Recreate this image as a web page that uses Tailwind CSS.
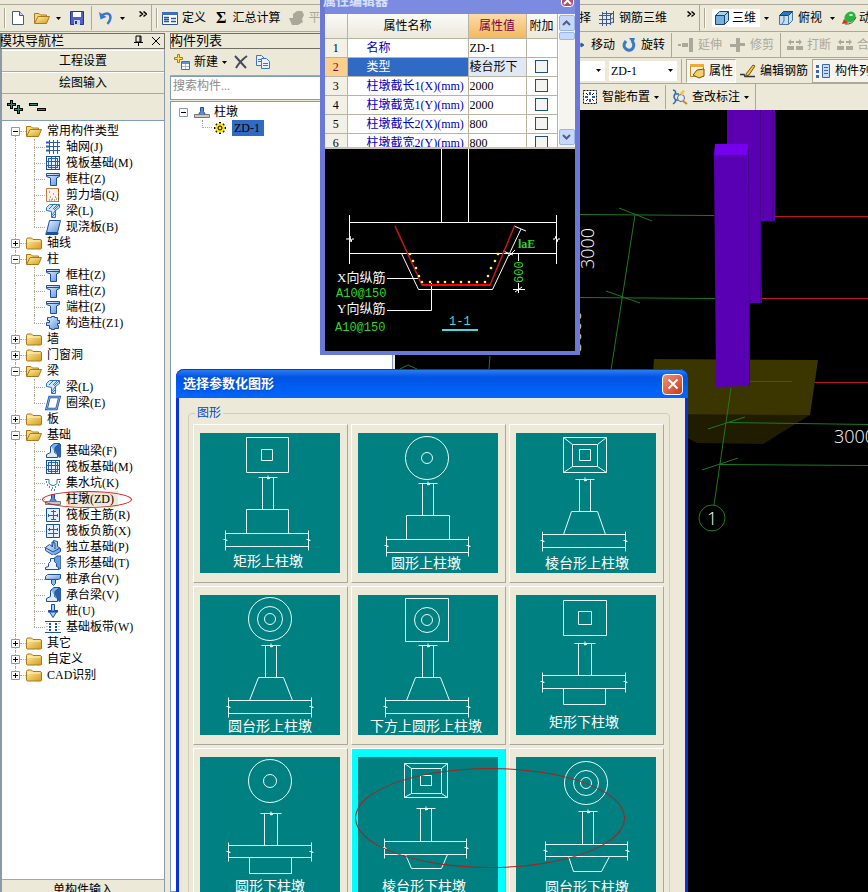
<!DOCTYPE html>
<html lang="zh-CN">
<head>
  <meta charset="UTF-8">
  <meta name="viewport" content="width=device-width, initial-scale=1.0">
  <title>选择参数化图形</title>
  <script src="https://cdn.jsdelivr.net/npm/@tailwindcss/browser@4"></script>
</head>
<body class="bg-[#ece9d8] font-['Liberation_Serif','Noto_Sans_CJK_SC',serif] text-xs leading-4 text-black">

  <!-- icon set -->
  <svg class="absolute size-0">
    <defs>
      <linearGradient id="gold" x1="0" y1="0" x2="1" y2="1"><stop offset="0" stop-color="#fff0a8"/><stop offset="1" stop-color="#d89a1c"/></linearGradient>
      <linearGradient id="blue" x1="0" y1="0" x2="1" y2="1"><stop offset="0" stop-color="#eaf4ff"/><stop offset="1" stop-color="#5a92dc"/></linearGradient>
    </defs>
    <symbol id="i-folder" viewBox="0 0 16 16"><path d="M.5 4.500q0-1.500 1.500-1.500h3.500l1.500 1.500h7q1.500 0 1.500 1.500v7q0 1-1 1h-13q-1 0-1-1z" fill="url(#gold)" stroke="#a87a1c"/><path d="M1.500 6h13" stroke="#fff6cc"/></symbol>
    <symbol id="i-open" viewBox="0 0 16 16"><path d="M.5 13V3.500h4.500l1.500 1.500h6v2.500" fill="#f4d878" stroke="#a87a1c"/><path d="M.5 13.500L4 6.500h11.500l-3 7z" fill="url(#gold)" stroke="#a87a1c"/></symbol>
    <symbol id="i-axis" viewBox="0 0 16 16"><path d="M4.500 1v14M8.500 1v14M12.500 1v14M1 3.500h14M1 7.500h14M1 11.500h14" stroke="#2c5fa8" fill="none"/><path d="M1 2.500h3v2h-3zM1 6.500h3v2h-3zM1 10.500h3v2h-3z" fill="#2c5fa8"/></symbol>
    <symbol id="i-raft" viewBox="0 0 16 16"><rect x="1.500" y="1.500" width="13" height="13" fill="#e4f0ff" stroke="#1c4f9c"/><rect x="3.500" y="3.500" width="9" height="9" fill="none" stroke="#2460b4"/><path d="M6.500 2v12M10.500 2v12M2 6.500h12M2 10.500h12" stroke="#2460b4"/></symbol>
    <symbol id="i-col" viewBox="0 0 16 16"><path d="M1.500 2.500h13v3l-3 1.500v7.500h-6V7l-4-1.500z" fill="url(#blue)" stroke="#1c4f9c"/><path d="M1.500 4.500h13" stroke="#1c4f9c"/></symbol>
    <symbol id="i-wall" viewBox="0 0 16 16"><path d="M1.500 1.500h12v13h-12z" fill="#fbf1e6" stroke="#c47a4a"/><path d="M13.500 2v13" stroke="#a05028" stroke-dasharray="3 1"/><path d="M4 5h1M8 7h1M5 10h1M4 13h1M7 12h1M10 10h1M9 13h1M11 12h1M6 13h1" stroke="#664"/></symbol>
    <symbol id="i-beam" viewBox="0 0 16 16"><path d="M1.500 4.500l3-3h10v3l-4 3v7h-4v-6l-5-1z" fill="#cfe6fa" stroke="#2c74b8"/><path d="M4 6l4-4M8 6l4-4M7 12l4-5M7 14l4-4M9 7l5-5" stroke="#2c74b8"/></symbol>
    <symbol id="i-slab" viewBox="0 0 16 16"><path d="M4.500 1.500h11l-3 12h-11z" fill="url(#blue)" stroke="#1c4f9c"/><path d="M1.500 13.500v1.500h10.500l1-1.500" stroke="#1c4f9c" stroke-width="2" fill="none"/></symbol>
    <symbol id="i-ring" viewBox="0 0 16 16"><path d="M4.500 2h10l-3 12h-10z" fill="#fff" stroke="#1c4f9c" stroke-width="2.500"/><path d="M4.500 2h10l-3 12h-10z" fill="none" stroke="#8cb4ea"/></symbol>
    <symbol id="i-ccol" viewBox="0 0 16 16"><path d="M4.500 2.500h2v-1h3v1h3v3h2v3h-2v2h1v3h-4v1h-3v-1h-2v-3h-3v-3h3v-2h-2v-3z" fill="url(#blue)" stroke="#1c4f9c"/></symbol>
    <symbol id="i-fbeam" viewBox="0 0 16 16"><path d="M8 4l3-3h5v13l-2 1z" fill="#2c5fa8"/><path d="M1.500 14.500v-3l4-2v-6h4v6l3 2v3z" fill="#dcecff" stroke="#1c4f9c"/><path d="M6 3l3-2.500h6l-5 4v5" fill="#7cb0ec" stroke="#1c4f9c"/></symbol>
    <symbol id="i-pit" viewBox="0 0 16 16"><path d="M0 4.500h4v4q4 4 8 0v-4h4" fill="none" stroke="#2c74b8"/><path d="M1 7h1M2 10h1M4 12h1M7 13h1M10 12h1M13 10h1M14 7h1M6 15h1M9 15h1" stroke="#2c5fa8" stroke-width="1.500"/></symbol>
    <symbol id="i-pier" viewBox="0 0 16 16"><path d="M6.500 3.500h3v4l2 3h-7l2-3z" fill="#5c8ce0" stroke="#1c4f9c"/><path d="M.5 10.500h15v3h-15z" fill="#c8c8c8" stroke="#777"/></symbol>
    <symbol id="i-bar1" viewBox="0 0 16 16"><path d="M1.500 1.500h13v13h-13z" fill="#e4f0ff" stroke="#1c4f9c"/><path d="M3 8.500h10M8.500 3v10M3.500 7v3M6 4.500h5M12.500 7v3M6 12.500h5" stroke="#2460b4" fill="none"/></symbol>
    <symbol id="i-bar2" viewBox="0 0 16 16"><path d="M1.500 1.500h13v13h-13z" fill="#e4f0ff" stroke="#1c4f9c"/><path d="M8.500 1v14M3 6.500h10M3 10.500h10M4.500 5v3M12.500 5v3" stroke="#2460b4"/></symbol>
    <symbol id="i-iso" viewBox="0 0 16 16"><path d="M.5 8.500l4-3 3 2 1-6 4 1v5l3 2v3l-7 4-8-5z" fill="url(#blue)" stroke="#1c4f9c"/><path d="M1 9l7 4 7-4M7 8V3l3 1v6" stroke="#1c4f9c" fill="none"/></symbol>
    <symbol id="i-strip" viewBox="0 0 16 16"><path d="M8 4l4-3h4v12l-3 2z" fill="#6c9cd8" stroke="#1c4f9c"/><path d="M.5 14.500v-2l3-1v-3l2-2v-3h4v3l2 2v3l2 1v2z" fill="#eaf4ff" stroke="#1c4f9c"/></symbol>
    <symbol id="i-cap" viewBox="0 0 16 16"><path d="M.5 5.500l2-2h13v4l-2 1h-13z" fill="url(#blue)" stroke="#1c4f9c"/><path d="M6.500 8.500h4v4l-2 2-2-2z" fill="#8cb8f0" stroke="#1c4f9c"/></symbol>
    <symbol id="i-pile" viewBox="0 0 16 16"><path d="M6.500 1.500h3v6h3l-4.500 7-4.500-7h3z" fill="#a8ccf6" stroke="#1c4f9c"/><path d="M3 8.500h10" stroke="#1c4f9c" stroke-width="2"/></symbol>
    <symbol id="i-band" viewBox="0 0 16 16"><path d="M0 2.500h16M0 13.500h16" stroke="#1c4f9c"/><path d="M5 4v8M11 4v8" stroke="#1c4f9c" stroke-width="2" stroke-dasharray="2 1"/><path d="M2 4v8M14 4v8" stroke="#88a" stroke-dasharray="1 2"/></symbol>
    <symbol id="i-gear" viewBox="0 0 16 16"><path d="M8 2v12M2 8h12M4 4l8 8M12 4l-8 8" stroke="#000" stroke-width="2"/><circle cx="8" cy="8" r="4.500" fill="#ffe800"/><path d="M8 3v10M3 8h10" stroke="#ffe800"/><circle cx="8" cy="8" r="2" fill="#ffe800" stroke="#000"/></symbol>
    <symbol id="i-new" viewBox="0 0 16 16"><path d="M2.500 1.500h7l4 4v9h-11z" fill="#fff" stroke="#4a5a78"/><path d="M9.500 1.500v4h4" fill="#bcd0f0" stroke="#4a5a78"/></symbol>
    <symbol id="i-save" viewBox="0 0 16 16"><path d="M1.500 1.500h13v13h-13z" fill="#4c62c4" stroke="#27348c"/><path d="M4 2h8v5H4z" fill="#fff"/><path d="M5 10h6v5H5z" fill="#cdd4ee"/><path d="M6 11h2v3H6z" fill="#27348c"/></symbol>
    <symbol id="i-undo" viewBox="0 0 16 16"><path d="M4 5q8-4 8.500 2.500q0 3-3 6.500" fill="none" stroke="#3f74d0" stroke-width="2.500"/><path d="M1 2l1.500 7.500L8.500 7z" fill="#3f74d0"/></symbol>
    <symbol id="i-form" viewBox="0 0 16 16"><path d="M.5 2.500h15v12H.5z" fill="#fff" stroke="#2c5296"/><path d="M0 2h16v3H0z" fill="#3c6cc0"/><path d="M2 7.500h5M2 9.500h5M2 11.500h5M9 8.500h5M9 11.500h5" stroke="#2c5296" stroke-width="1.500"/></symbol>
    <symbol id="i-duck" viewBox="0 0 16 16"><path d="M0 8h4V4l4-3h5l2 4-2 4 1 3-5 3H3z" fill="#aca899"/></symbol>
    <symbol id="i-add" viewBox="0 0 16 16"><path d="M3.500.5h2v3h3v2h-3v3h-2v-3h-3v-2h3z" fill="#ffe450" stroke="#a87a1c"/><path d="M7.500 7.500h8v8h-8z" fill="#fff" stroke="#3c6cc0"/><path d="M8 8h7v2H8z" fill="#5c90e0"/><path d="M8 12.500h7M11.500 10v5" stroke="#9ab8ea"/></symbol>
    <symbol id="i-del" viewBox="0 0 16 16"><path d="M2 2l11 12M14 2q-7 5-11 12" stroke="#444c5c" stroke-width="2" fill="none"/></symbol>
    <symbol id="i-copy" viewBox="0 0 16 16"><path d="M1.500 1.500h5l3 3v7h-8z" fill="#eaf2ff" stroke="#3c74cc"/><path d="M6.500 4.500h5l3 3v7h-8z" fill="#eaf2ff" stroke="#3c74cc"/><path d="M3 5.500h3M3 7.500h3M8 9.500h5M8 11.500h5" stroke="#3c74cc"/></symbol>
    <symbol id="i-grid3" viewBox="0 0 16 16"><path d="M0 5.500h11l4-3M0 9.500h11l4-2M0 13.500h11l4-2M3.500 2v14M7.500 1v15M11.500 3v12M14.500 1v12M3.500 3.500h11" fill="none" stroke="#3c5a96"/></symbol>
    <symbol id="i-cube" viewBox="0 0 16 16"><path d="M1.500 5.500l4-4h9v9l-4 4h-9z" fill="#a8d0f0" stroke="#1c4468"/><path d="M1.500 5.500h9v9M10.500 5.500l4-4" fill="none" stroke="#1c4468"/><path d="M2 6h8v8H2z" fill="#74b0e4"/></symbol>
    <symbol id="i-top" viewBox="0 0 16 16"><path d="M1.500 5.500l4-4h9v9l-4 4h-9z" fill="#c8def4" stroke="#4c7498"/><path d="M1.500 5.500l4-4h9l-4 4z" fill="#2c78c0" stroke="#1c4468"/><path d="M10.500 5.500v9M4 14l2-3V6" fill="none" stroke="#4c7498"/></symbol>
    <symbol id="i-orbit" viewBox="0 0 16 16"><ellipse cx="9" cy="7" rx="6" ry="5" fill="#30b040" transform="rotate(-40 9 7)"/><ellipse cx="10" cy="5" rx="2" ry="1" fill="#c8f8c8"/><path d="M1 14l2-5 4 4z" fill="#d03020"/><path d="M4 14q8 1 11-7" stroke="#1c6c28" fill="none"/></symbol>
    <symbol id="i-move" viewBox="0 0 16 16"><path d="M8 1l2 3H6zM8 15l2-3H6zM1 8l3-2v4zM15 8l-3-2v4zM7.500 3v10M3 8h10" fill="#2c5ca8" stroke="#2c5ca8"/></symbol>
    <symbol id="i-rot" viewBox="0 0 16 16"><path d="M5 4q-4 5 0 8q4 3 7-1q2-4-1-7" fill="none" stroke="#3a78c8" stroke-width="3"/><path d="M8 1h6l-2 6z" fill="#3a78c8"/></symbol>
    <symbol id="i-ext" viewBox="0 0 16 16"><path d="M11 1h4v14h-4zM0 7h3v2H0zM4 6h6v4H4z" fill="#aca899"/></symbol>
    <symbol id="i-trim" viewBox="0 0 16 16"><path d="M6 1h4v14H6zM0 7h6v3H0zM10 6h5v3h-5z" fill="#aca899"/></symbol>
    <symbol id="i-brk" viewBox="0 0 16 16"><path d="M0 9h7v4H0zM9 9h7v4H9zM1 5l3-3v2h3v2H4v2zM15 5l-3-3v2H9v2h3v2z" fill="#aca899"/></symbol>
    <symbol id="i-prop" viewBox="0 0 16 16"><path d="M1.500 1.500h13v12h-13z" fill="#fff4d8" stroke="#c88820"/><path d="M1 1h14v3H1z" fill="#f0a838"/><path d="M4 12l4-5 7-1v7l-5 2z" fill="#f0d070" stroke="#785010"/></symbol>
    <symbol id="i-pen" viewBox="0 0 16 16"><path d="M0 11.500h4l1 2h10" stroke="#333" stroke-width="1.500" fill="none"/><path d="M6 11l7-9 2 1-6 9-3 1z" fill="#f0c840" stroke="#785010"/></symbol>
    <symbol id="i-list" viewBox="0 0 16 16"><path d="M7.500 1.500h7v13h-7z" fill="#c8dcf8" stroke="#3c64a8"/><path d="M9 4.500h4M9 7.500h4M9 10.500h4" stroke="#3c64a8"/><path d="M1 2h3v3H1zM1 7h3v3H1zM1 12h3v3H1z" fill="#3c64a8"/></symbol>
    <symbol id="i-smart" viewBox="0 0 16 16"><path d="M1.500 1.500h13v13h-13z" fill="#fff" stroke="#111" stroke-dasharray="2 1"/><path d="M8 3v3M8 10v3M3 8h3M10 8h3" stroke="#2c5ca8" stroke-width="2"/><path d="M4 4l2 2M12 4l-2 2M4 12l2-2M12 12l-2-2" stroke="#111"/></symbol>
    <symbol id="i-find" viewBox="0 0 16 16"><path d="M1 1q4 1 2 4t0 5-2 5M4 5h3M4 11h3" stroke="#2c64b8" stroke-width="1.500" fill="none"/><circle cx="9" cy="9" r="3.500" fill="#e0eefc" stroke="#666"/><path d="M11 12l4 3" stroke="#c88820" stroke-width="2"/><path d="M8 4l3-3 2 1-3 5z" fill="#f0c840"/></symbol>
    <symbol id="i-drop" viewBox="0 0 5 3"><path d="M0 0h5L2.500 3z"/></symbol>
    <symbol id="i-more" viewBox="0 0 8 7"><path d="M.5.5l3 2.500-3 2.500M4.500.5l3 2.500-3 2.500" fill="none" stroke="#000" stroke-width="1.500"/></symbol>
  </svg>

  <div class="relative flex h-screen flex-col overflow-hidden bg-[#ece9d8]">

    <!-- main toolbar -->
    <div class="h-[5px] shrink-0 border-b border-[#aca899]"></div>
    <div class="flex h-[27px] shrink-0 items-center whitespace-nowrap border-b border-[#aca899]">
      <div class="flex h-full w-[152px] shrink-0 items-center border-r border-[#aca899] pl-1">
        <span class="h-5 w-[2px] border-l border-[#aca899] bg-white"></span>
        <button class="ml-1" aria-label="新建文件"><svg class="size-4"><use href="#i-new"/></svg></button>
        <button class="ml-2 flex items-center gap-1.5" aria-label="打开"><svg class="size-4"><use href="#i-open"/></svg><svg class="h-[3px] w-[5px]"><use href="#i-drop"/></svg></button>
        <button class="ml-2" aria-label="保存"><svg class="size-4"><use href="#i-save"/></svg></button>
        <span class="mx-1.5 h-6 border-l border-[#aca899]"></span>
        <button class="flex items-center gap-1.5" aria-label="撤销"><svg class="size-4"><use href="#i-undo"/></svg><svg class="h-[3px] w-[5px]"><use href="#i-drop"/></svg></button>
        <button class="ml-auto mr-1 pb-2" aria-label="更多"><svg class="h-[7px] w-2"><use href="#i-more"/></svg></button>
      </div>
      <div class="flex h-full w-[548px] shrink-0 items-center border-r border-[#aca899] pl-1">
        <span class="h-5 w-[2px] border-l border-[#aca899] bg-white"></span>
        <button class="ml-1 flex items-center gap-1"><svg class="size-4"><use href="#i-form"/></svg>定义</button>
        <button class="ml-2.5 flex items-center gap-1.5"><b class="text-base">Σ</b>汇总计算</button>
        <button class="ml-2 flex items-center gap-1 text-[#aca899]"><svg class="size-4"><use href="#i-duck"/></svg>平齐板顶</button>
        <button class="ml-auto">选择</button>
        <button class="ml-2 flex items-center gap-1"><svg class="size-4"><use href="#i-grid3"/></svg>钢筋三维</button>
        <button class="ml-5 mr-1 pb-2" aria-label="更多"><svg class="h-[7px] w-2"><use href="#i-more"/></svg></button>
      </div>
      <div class="flex h-full items-center pl-1">
        <span class="h-5 w-[2px] border-l border-[#aca899] bg-white"></span>
        <button class="ml-1.5 flex h-[18px] items-center bg-white pl-0.5"><svg class="mr-0.5 size-4"><use href="#i-cube"/></svg>三维<span class="ml-1 flex h-full w-3 items-center justify-center bg-[#ece9d8]"><svg class="h-[3px] w-[5px]"><use href="#i-drop"/></svg></span></button>
        <button class="ml-1.5 flex items-center gap-1"><svg class="size-4"><use href="#i-top"/></svg>俯视<svg class="ml-1 h-[3px] w-[5px]"><use href="#i-drop"/></svg></button>
        <button class="ml-1.5 flex items-center gap-0.5"><svg class="size-4"><use href="#i-orbit"/></svg>动态观察</button>
      </div>
    </div>

    <div class="flex min-h-0 flex-1">
      <!-- module navigation -->
      <aside class="flex w-[165px] shrink-0 flex-col">
        <header class="mt-px flex h-4 items-center overflow-hidden border border-[#716f64] text-[13px]">
          <h2 class="-ml-0.5">模块导航栏</h2>
          <button class="ml-auto" aria-label="固定"><svg class="size-3" viewBox="0 0 12 12"><path d="M4 1h5v6H4zM2 7.500h9M6.500 7v4" fill="none" stroke="#000"/><path d="M8 1v6" stroke="#000"/></svg></button>
          <button class="ml-1.5 mr-0.5" aria-label="关闭"><svg class="size-3" viewBox="0 0 12 12"><path d="M2 2l8 8M10 2l-8 8" stroke="#000"/></svg></button>
        </header>
        <div class="flex min-h-0 flex-1 flex-col border-l-2 border-r border-[#8c9aa8] pt-px">
          <button class="h-[22px] shrink-0 border-y border-t-white border-b-[#aca899]">工程设置</button>
          <button class="h-[22px] shrink-0 border-y border-t-white border-b-[#aca899]">绘图输入</button>
          <div class="flex h-[27px] shrink-0 items-center gap-1.5 border-b border-[#7f9db9] pl-1">
            <button aria-label="全部展开"><svg class="h-4 w-[17px]" viewBox="0 0 17 16"><path d="M5.500 1v9M1 5.500h9M12.500 6v9M8 10.500h9" stroke="#000" stroke-width="3"/><path d="M5.500 2v7M2 5.500h7M12.500 7v7M9 10.500h7" stroke="#1c8c7c"/></svg></button>
            <button aria-label="全部折叠"><svg class="h-4 w-[17px]" viewBox="0 0 17 16"><path d="M0 5.500h9M8 10.500h9" stroke="#000" stroke-width="3"/><path d="M1 5.500h7M9 10.500h7" stroke="#1c8c7c"/></svg></button>
          </div>
          <ul id="module-tree" class="min-h-0 flex-1 overflow-hidden bg-white pt-0.5"></ul>
          <button class="h-[13px] shrink-0 overflow-hidden border-t border-[#aca899] pt-0.5">单构件输入</button>
        </div>
      </aside>

      <!-- component list -->
      <aside class="ml-[5px] flex w-[225px] shrink-0 flex-col border-r-2 border-[#ece9d8]">
        <header class="mt-px flex h-4 items-center overflow-hidden border border-[#716f64] text-[13px]"><h2 class="-ml-px">构件列表</h2></header>
        <div class="flex h-[27px] shrink-0 items-center border-b border-[#aca899] pl-1">
          <button class="flex items-center gap-1"><svg class="size-4"><use href="#i-add"/></svg>新建<svg class="h-[3px] w-[5px]"><use href="#i-drop"/></svg></button>
          <button class="ml-1.5" aria-label="删除"><svg class="size-4"><use href="#i-del"/></svg></button>
          <button class="ml-1.5" aria-label="复制"><svg class="size-4"><use href="#i-copy"/></svg></button>
        </div>
        <input type="text" placeholder="搜索构件..." aria-label="搜索构件" class="h-6 shrink-0 border border-[#7f9db9] bg-white px-0.5 pb-1 placeholder:text-[#8c8c8c]">
        <ul class="mt-px flex-1 border border-[#7f9db9] bg-white pl-2 pt-0.5">
          <li class="flex h-4 items-center">
            <svg class="mr-1.5 size-[9px]" viewBox="0 0 9 9"><path d="M.5.5h8v8h-8z" fill="#fff" stroke="#7f9db9"/><path d="M2 4.500h5" stroke="#000"/></svg>
            <svg class="mr-1 size-4"><use href="#i-pier"/></svg>柱墩
          </li>
          <li class="flex h-4 items-center pl-[23px]">
            <span class="mb-2 h-2 w-2.5 border-b border-l border-dotted border-[#aca899]"></span>
            <svg class="size-4"><use href="#i-gear"/></svg>
            <span class="ml-1 w-8 bg-[#316ac5] px-0.5">ZD-1</span>
          </li>
        </ul>
      </aside>

      <!-- drawing area with its toolbars -->
      <main class="flex min-w-0 flex-1 flex-col overflow-hidden whitespace-nowrap">
        <div class="flex h-[26px] shrink-0 items-center border-b border-[#aca899] pl-[174px]">
          <button class="flex items-center gap-1.5"><svg class="size-4"><use href="#i-move"/></svg>移动</button>
          <button class="ml-1.5 flex items-center gap-1"><svg class="size-4"><use href="#i-rot"/></svg>旋转</button>
          <span class="mx-1.5 h-6 border-l border-[#aca899]"></span>
          <button class="flex items-center gap-1 text-[#aca899]"><svg class="size-4"><use href="#i-ext"/></svg>延伸</button>
          <button class="ml-2 flex items-center gap-1 text-[#aca899]"><svg class="size-4"><use href="#i-trim"/></svg>修剪</button>
          <span class="mx-1.5 h-6 border-l border-[#aca899]"></span>
          <button class="flex items-center gap-1 text-[#aca899]"><svg class="size-4"><use href="#i-brk"/></svg>打断</button>
          <button class="ml-1.5 flex items-center gap-1 text-[#aca899]"><svg class="size-4"><use href="#i-brk"/></svg>合并</button>
        </div>
        <div class="flex h-[26px] shrink-0 items-center border-b border-[#aca899] pl-[130px]">
          <label class="relative flex items-center">
            <select class="h-5 w-20 appearance-none bg-white px-1" aria-label="构件类型"><option>柱墩</option></select>
            <svg class="pointer-events-none absolute right-1 h-[3px] w-[5px]"><use href="#i-drop"/></svg>
          </label>
          <label class="relative ml-1 flex items-center">
            <select class="h-5 w-[68px] appearance-none bg-white px-0.5" aria-label="构件名称"><option>ZD-1</option></select>
            <svg class="pointer-events-none absolute right-1 h-[3px] w-[5px]"><use href="#i-drop"/></svg>
          </label>
          <span class="ml-1 h-6 border-l border-[#aca899]"></span>
          <button class="ml-1 flex h-6 items-center gap-1 border border-[#aca899] border-b-white border-r-white bg-[#f6f4ec] px-0.5"><svg class="size-4"><use href="#i-prop"/></svg>属性</button>
          <button class="ml-1 flex items-center gap-1"><svg class="size-4"><use href="#i-pen"/></svg>编辑钢筋</button>
          <button class="ml-1 flex h-6 items-center gap-1 border border-[#aca899] bg-[#f6f4ec] px-0.5"><svg class="size-4"><use href="#i-list"/></svg>构件列表</button>
        </div>
        <div class="flex h-[26px] shrink-0 items-center pl-[187px]">
          <button class="flex items-center gap-1"><svg class="size-4"><use href="#i-smart"/></svg>智能布置<svg class="h-[3px] w-[5px]"><use href="#i-drop"/></svg></button>
          <span class="mx-1.5 h-6 border-l border-[#aca899]"></span>
          <button class="flex h-full items-center gap-1 border-r border-[#aca899] pr-1.5"><svg class="size-4"><use href="#i-find"/></svg>查改标注<svg class="h-[3px] w-[5px]"><use href="#i-drop"/></svg></button>
        </div>
        <div class="min-h-0 flex-1 bg-black">
          <svg class="h-full w-full">
            <g transform="translate(-395 -110)" fill="none">
              <path d="M654 359L818 360L810 415H650z" fill="#3b3600"/>
              <path d="M640 414L810 415L763 444L697 443z" fill="#1f1c00"/>
              <path d="M580 214.500L714 215.500M580 297.500L715 298.500M619 208L652 221M606 291L640 303M635 215L611 370M400 369L408 365L417 369M490 356L489 369M731 388L714 505M708 429L745 417M702 470L738 458M727 422.500L868 424.500M720 464.500L868 465.500" stroke="#1e7a1e"/>
              <circle cx="712" cy="518" r="13" stroke="#1e7a1e"/>
              <path d="M775 216.500H868M762 298.500H868M750 381.500H792M815 382.500H868" stroke="#c01818"/>
              <path d="M761 110H775V221H761z" fill="#5a00b0"/>
              <path d="M727 110H761V240L762 303H727z" fill="#5a00b0"/>
              <path d="M760.500 110V303M772.500 110V221" stroke="#43008c"/>
              <path d="M714 154H748L750 386L716 387z" fill="#5a00b4"/>
              <path d="M715 144H748L747 155H714z" fill="#7600ee"/>
              <path d="M748.500 150L749.500 386" stroke="#43008c"/>
              <g fill="#fff" class="font-['Open_Sans'] text-lg font-light">
                <text x="834" y="443">3000</text>
                <text x="707" y="525">1</text>
                <text transform="translate(594 269) rotate(-90)">3000</text>
                <text transform="translate(581 352) rotate(-90)">3000</text>
              </g>
            </g>
          </svg>
        </div>
      </main>
    </div>

    <!-- property editor window -->
    <section class="absolute left-[320px] -top-[13px] w-[260px] border-x-[5px] border-b-4 border-[#6a78d8]">
      <header class="flex h-[27px] items-center bg-[#7b8ce0] pr-px">
        <h2 class="-ml-0.5 text-[13px] font-bold text-[#d8e0f8]">属性编辑器</h2>
        <button class="ml-auto flex size-[13px] items-center justify-center rounded-sm border border-white bg-[#b0506c]" aria-label="关闭"><svg class="size-[9px]" viewBox="0 0 9 9"><path d="M1 1l7 7M8 1l-7 7" stroke="#fff" stroke-width="2"/></svg></button>
      </header>
      <div class="flex h-[135px] overflow-hidden border-b-2 border-[#c8c4b4] bg-white">
        <table class="h-max w-[232px] table-fixed border-collapse">
          <thead>
            <tr class="h-6 bg-linear-to-b from-[#fbfaf6] to-[#ebe8dc]">
              <th class="w-[22px] border-r border-[#b8b4a4]"></th>
              <th class="w-[121px] border-r border-[#b8b4a4] font-normal">属性名称</th>
              <th class="w-[58px] border-r border-[#b8b4a4] bg-linear-to-b from-[#fbdca8] to-[#f2b85c] font-normal text-[#800040]">属性值</th>
              <th class="w-[31px] border-r border-[#b8b4a4] font-normal">附加</th>
            </tr>
          </thead>
          <tbody id="property-rows"></tbody>
        </table>
        <div class="ml-px flex flex-1 flex-col gap-px bg-[#f6f5f0] pt-px">
          <button class="flex size-4 items-center justify-center rounded-xs border border-[#9ab4ec] bg-[#c8d8fc]" aria-label="向上滚动"><svg class="h-[6px] w-[9px]" viewBox="0 0 9 6"><path d="M1 5l3.500-3.500L8 5" fill="none" stroke="#4d6185" stroke-width="2"/></svg></button>
          <span class="h-2 w-4 rounded-xs border border-[#9ab4ec] bg-[#c8d8fc]"></span>
          <button class="mt-auto mb-0.5 flex size-4 items-center justify-center rounded-xs border border-[#9ab4ec] bg-[#c8d8fc]" aria-label="向下滚动"><svg class="h-[6px] w-[9px]" viewBox="0 0 9 6"><path d="M1 1l3.500 3.500L8 1" fill="none" stroke="#4d6185" stroke-width="2"/></svg></button>
        </div>
      </div>
      <svg class="block h-[202px] w-full bg-black" viewBox="0 0 250 202">
        <g fill="none" stroke="#fff">
          <path d="M116.500 0V73.500M143.500 0V73.500M24.500 73.500H231.500M24.500 104.500H231.500M24.500 66V115M231.500 66V115"/>
          <path d="M21 90h3l1-3 1 6 1-3h2M228 90h2l1-3 1 6 1-3h2"/>
          <path d="M76.500 104.500L93.500 140.500H167.500L196 80M189 77L201 82M178 102L188 106M184 107l6-6M188 104.500h13M193.500 104V112M193.500 134V144M188 140.500H200M190 143l7-5"/>
          <path d="M62 129.500H93.500M62 161.500H106.500V134"/>
        </g>
        <path d="M70 77L97 136H165L189.500 77" fill="none" stroke="#c81818" stroke-width="1.500"/>
        <path d="M97 136H165" stroke="#f00" stroke-width="2"/>
        <g id="rebar-dots" fill="#ffff30"></g>
        <g class="font-['Liberation_Serif','Noto_Sans_CJK_SC',serif] text-[13px]" fill="#fff">
          <text x="12" y="133">X向纵筋</text>
          <text x="12" y="164">Y向纵筋</text>
        </g>
        <g class="font-['Liberation_Mono'] text-xs" fill="#2fd42f">
          <text x="11" y="148">A10@150</text>
          <text x="10" y="182">A10@150</text>
          <text transform="translate(198 134) rotate(-90)">600</text>
          <text x="193" y="99" class="font-['Liberation_Serif'] font-bold">laE</text>
        </g>
        <text x="124" y="176" fill="#48d8e0" class="font-['Liberation_Mono'] text-xs">1-1</text>
        <path d="M117 181H153" stroke="#48d8e0" stroke-width="2"/>
      </svg>
    </section>

    <!-- parametric shape dialog -->
    <section class="absolute left-[176px] top-[369px] h-[560px] w-[512px] rounded-t-lg border-x-[3px] border-[#0831d9] bg-[#ece9d8]">
      <header class="-mx-[3px] flex h-[29px] items-center rounded-t-lg border-t border-[#0a3cc0] bg-linear-to-b from-[#2a7cf4] via-[#0054e3] via-25% to-[#0066ff] pl-[7px] pr-[5px]">
        <h1 class="text-[13px] font-bold text-white text-shadow-sm">选择参数化图形</h1>
        <button class="ml-auto flex size-[21px] items-center justify-center rounded border border-white bg-linear-to-br from-[#f09078] to-[#c83410]" aria-label="关闭"><svg class="size-3" viewBox="0 0 12 12"><path d="M1.500 1.500l9 9M10.500 1.500l-9 9" stroke="#fff" stroke-width="2"/></svg></button>
      </header>
      <fieldset class="ml-[9px] mr-[15px] mt-[7px] h-full rounded border border-[#d0cdba] pl-1">
        <legend class="ml-0.5 px-0.5 text-[#0046d5]">图形</legend>
        <div id="shape-grid" class="mt-[3px] grid w-max grid-cols-3 gap-[3px]"></div>
      </fieldset>
    </section>

    <!-- red mark -->
    <div class="pointer-events-none absolute left-[355px] top-[768px] h-[100px] w-[270px] rounded-[50%] border border-[#a82020]"></div>
  </div>

  <script>
    const modules = [
      { name: "常用构件类型", children: [["axis", "轴网(J)"], ["raft", "筏板基础(M)"], ["col", "框柱(Z)"], ["wall", "剪力墙(Q)"], ["beam", "梁(L)"], ["slab", "现浇板(B)"]] },
      { name: "轴线" },
      { name: "柱", children: [["col", "框柱(Z)"], ["col", "暗柱(Z)"], ["col", "端柱(Z)"], ["ccol", "构造柱(Z1)"]] },
      { name: "墙" },
      { name: "门窗洞" },
      { name: "梁", children: [["beam", "梁(L)"], ["ring", "圈梁(E)"]] },
      { name: "板" },
      { name: "基础", children: [["fbeam", "基础梁(F)"], ["raft", "筏板基础(M)"], ["pit", "集水坑(K)"], ["pier", "柱墩(ZD)"], ["bar1", "筏板主筋(R)"], ["bar2", "筏板负筋(X)"], ["iso", "独立基础(P)"], ["strip", "条形基础(T)"], ["cap", "桩承台(V)"], ["fbeam", "承台梁(V)"], ["pile", "桩(U)"], ["band", "基础板带(W)"]] },
      { name: "其它" },
      { name: "自定义" },
      { name: "CAD识别" }
    ];

    const tree = document.getElementById("module-tree");
    modules.forEach((group, g) => {
      const lastGroup = g === modules.length - 1;
      const plus = group.children ? "" : "M4.5 2v5";
      let html = `
        <li class="relative flex h-4 items-center pl-[9px]">
          <span class="absolute left-[13px] ${g === 0 ? "top-2 h-2" : lastGroup ? "top-0 h-2" : "top-0 h-4"} border-l border-dotted border-[#aca899]"></span>
          <svg class="relative size-[9px]" viewBox="0 0 9 9"><path d="M.5.5h8v8h-8z" fill="#fff" stroke="#7f9db9"/><path d="M2 4.500h5${plus}" stroke="#000"/></svg>
          <span class="w-1.5 border-t border-dotted border-[#aca899]"></span>
          <svg class="mr-[5px] size-4"><use href="${group.children ? "#i-open" : "#i-folder"}"/></svg>${group.name}
        </li>`;
      (group.children || []).forEach(([icon, label], i) => {
        const last = i === group.children.length - 1;
        const current = label === "柱墩(ZD)";
        html += `
        <li class="relative flex h-4 items-center pl-[43px]">
          <span class="absolute left-[13px] top-0 h-4 border-l border-dotted border-[#aca899]"></span>
          <span class="absolute left-8 top-0 ${last ? "h-2" : "h-4"} border-l border-dotted border-[#aca899]"></span>
          <span class="absolute left-8 top-2 w-[11px] border-t border-dotted border-[#aca899]"></span>
          <svg class="relative mr-[5px] size-4"><use href="#i-${icon}"/></svg><span class="${current ? "bg-[#ece9d8] pr-1" : ""}">${label}</span>
          ${current ? '<span class="absolute left-10 top-0 h-[17px] w-[90px] rounded-[50%] border border-[#d02020]"></span>' : ""}
        </li>`;
      });
      tree.insertAdjacentHTML("beforeend", html);
    });

    const properties = [
      ["名称", "ZD-1"],
      ["类型", "棱台形下"],
      ["柱墩截长1(X)(mm)", "2000"],
      ["柱墩截宽1(Y)(mm)", "2000"],
      ["柱墩截长2(X)(mm)", "800"],
      ["柱墩截宽2(Y)(mm)", "800"]
    ];

    const rows = document.getElementById("property-rows");
    properties.forEach(([name, value], i) => {
      const active = i === 1;
      rows.insertAdjacentHTML("beforeend", `
        <tr class="h-[19px] whitespace-nowrap border-t border-[#b8b4a4]">
          <td class="border-r border-[#b8b4a4] text-center ${active ? "bg-[#fbd08c] text-[#800040]" : "bg-[#f3f1e6]"}">${i + 1}</td>
          <td class="border-r border-[#b8b4a4] pl-[19px] ${active ? "bg-[#316ac5] text-white" : "text-[#0000c0]"}">${name}</td>
          <td class="border-r border-[#b8b4a4] pl-px ${active ? "bg-[#e0e8f6]" : ""}">${value}</td>
          <td class="border-r border-[#b8b4a4]">${i > 0 ? `<input type="checkbox" aria-label="附加 ${name}" class="mx-auto block size-[13px] appearance-none border border-[#1c5180] bg-[#f4f4f0]">` : ""}</td>
        </tr>`);
    });

    const dots = [[85, 105], [88, 112], [91, 119], [94, 127], [97, 133], [105, 133], [113, 133], [120, 133], [128, 133], [136, 133], [144, 133], [152, 133], [160, 133], [163, 127], [166, 119], [170, 112], [173, 105]];
    document.getElementById("rebar-dots").innerHTML = dots.map(([x, y]) => `<circle cx="${x}" cy="${y}" r="1.300"/>`).join("");

    // helpers for the thumbnails, all on a 140 x 140 board
    const rect = (x1, y1, x2, y2) => `M${x1} ${y1}H${x2}V${y2}H${x1}z`;
    const ring = (cx, cy, r) => `M${cx - r} ${cy}a${r} ${r} 0 1 0 ${2 * r} 0a${r} ${r} 0 1 0 ${-2 * r} 0`;
    const frame = (a, b, c, d, e, f, g, h) => rect(a, b, c, d) + rect(e, f, g, h) + `M${a} ${b}L${e} ${f}M${c} ${b}L${g} ${f}M${a} ${d}L${e} ${h}M${c} ${d}L${g} ${h}`;
    const column = (x1, x2, y1, y2) => `M${x1 - 4} ${y1}H${x2 + 4}M${x1} ${y1}V${y2}M${x2} ${y1}V${y2}M${(x1 + x2) / 2} ${y1 - 2}v4M${(x1 + x2) / 2 - 1} ${y1 + 1}h3`;
    const slab = (x1, x2, y1, y2) => `M${x1} ${y1}H${x2}M${x1} ${y2}H${x2}M${x1} ${y1 - 3}V${y2 + 4}M${x2} ${y1 - 3}V${y2 + 4}M${x1 - 2} ${y1 + 6}h3M${x1} ${y1 + 7}h2M${x2 - 2} ${y1 + 6}h3M${x2} ${y1 + 7}h2`;
    const trap = (a, b, y1, c, d, y2) => `M${a} ${y1}H${b}L${d} ${y2}H${c}z`;

    const shapes = [
      { name: "矩形上柱墩", x: 68, y: 133, d: rect(46.5, 4.5, 88.5, 39.5) + rect(61.5, 16.5, 72.5, 27.5) + column(62.5, 73.5, 44.5, 76.5) + rect(46.5, 76.5, 88.5, 100.5) + slab(25.5, 108.5, 100.5, 113.5) },
      { name: "圆形上柱墩", x: 68, y: 135, d: ring(69, 25, 21.5) + ring(69, 25, 5.5) + column(64.5, 75.5, 50.5, 82.5) + rect(48.5, 82.5, 91.5, 106.5) + slab(28.5, 110.5, 106.5, 119.5) },
      { name: "棱台形上柱墩", x: 71, y: 135, d: frame(47.5, 4.5, 90.5, 39.5, 56.5, 11.5, 81.5, 33.5) + rect(63.5, 16.5, 74.5, 27.5) + column(63.5, 74.5, 46.5, 78.5) + trap(55.5, 81.5, 78.5, 47.5, 89.5, 101.5) + slab(26.5, 109.5, 101.5, 114.5) },
      { name: "圆台形上柱墩", x: 70, y: 136, d: ring(70, 24, 21.5) + ring(70, 24, 12.5) + ring(70, 24, 5.5) + column(65.5, 76.5, 50.5, 82.5) + trap(58.5, 83.5, 82.5, 49.5, 92.5, 105.5) + slab(28.5, 111.5, 105.5, 118.5) },
      { name: "下方上圆形上柱墩", x: 68, y: 136, d: rect(47.5, 3.5, 90.5, 46.5) + ring(69, 25, 12.5) + ring(69, 25, 5.5) + column(64.5, 75.5, 50.5, 82.5) + trap(57.5, 82.5, 82.5, 48.5, 91.5, 105.5) + slab(27.5, 110.5, 105.5, 118.5) },
      { name: "矩形下柱墩", x: 68, y: 132, d: rect(47.5, 5.5, 90.5, 40.5) + rect(62.5, 16.5, 75.5, 29.5) + column(62.5, 75.5, 48.5, 80.5) + slab(26.5, 109.5, 80.5, 93.5) + rect(47.5, 93.5, 89.5, 109.5) },
      { name: "圆形下柱墩", x: 70, y: 134, d: ring(70, 24, 21.5) + ring(70, 24, 6.5) + column(64.5, 77.5, 56.5, 88.5) + slab(28.5, 111.5, 88.5, 100.5) + rect(49.5, 100.5, 91.5, 116.5) },
      { name: "棱台形下柱墩", x: 66, y: 134, selected: true, d: frame(46.5, 6.5, 89.5, 40.5, 53.5, 11.5, 83.5, 36.5) + rect(62.5, 18.5, 73.5, 28.5) + column(62.5, 73.5, 51.5, 84.5) + slab(26.5, 108.5, 84.5, 97.5) + trap(47.5, 89.5, 97.5, 53.5, 83.5, 111.5) },
      { name: "圆台形下柱墩", x: 71, y: 135, d: ring(70, 26, 21.5) + ring(70, 26, 12.5) + ring(70, 26, 5.5) + column(66.5, 77.5, 54.5, 87.5) + slab(29.5, 111.5, 87.5, 99.5) + trap(52.5, 93.5, 99.5, 57.5, 85.5, 114.5) }
    ];

    document.getElementById("shape-grid").innerHTML = shapes.map(s => `
      <button class="h-[159px] w-[155px] border border-l-white border-t-white border-b-[#aca899] border-r-[#aca899] pb-3 pl-1.5 pr-[7px] pt-2 ${s.selected ? "bg-[#00ffff]" : ""}">
        <svg class="block size-[140px] bg-[#008080]" viewBox="0 0 140 140">
          <path d="${s.d}" fill="none" stroke="#e8ffff"/>
          <text x="${s.x}" y="${s.y}" text-anchor="middle" fill="#fff" class="font-['Noto_Sans_CJK_SC',sans-serif] text-sm">${s.name}</text>
        </svg>
      </button>`).join("");
  </script>

</body>
</html>
